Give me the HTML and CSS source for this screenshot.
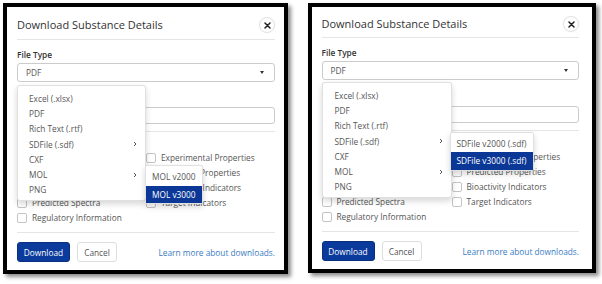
FILE: index.html
```html
<!DOCTYPE html>
<html lang="en">
<head>
<meta charset="utf-8">
<title>Download Substance Details</title>
<link rel="stylesheet" href="styles.css">
</head>
<body>
<div class="page">
  <div class="frame frame-a">
    <div class="modal">
      <div class="modal-header">
        <h2 class="modal-title">Download Substance Details</h2>
        <span class="close"><svg width="7" height="7" viewBox="0 0 7 7"><path d="M1 1L6 6M6 1L1 6" stroke="#222" stroke-width="1.5" stroke-linecap="round"/></svg></span>
      </div>
      <div class="modal-body">
        <div class="field-label">File Type</div>
        <div class="select-wrap">
          <div class="select"><span>PDF</span><span class="caret"></span></div>
          <ul class="menu">
            <li>Excel (.xlsx)</li>
            <li>PDF</li>
            <li>Rich Text (.rtf)</li>
            <li class="has-sub">SDFile (.sdf)<svg class="chev" width="4" height="6" viewBox="0 0 4 6"><path d="M1 1L3 3L1 5" fill="none" stroke="#555" stroke-width="1"/></svg></li>
            <li>CXF</li>
            <li class="has-sub">MOL<svg class="chev" width="4" height="6" viewBox="0 0 4 6"><path d="M1 1L3 3L1 5" fill="none" stroke="#555" stroke-width="1"/></svg>
              <ul class="submenu">
                <li>MOL v2000</li>
                <li class="active">MOL v3000</li>
              </ul>
            </li>
            <li>PNG</li>
          </ul>
        </div>
        <div class="field-label second"></div>
        <div class="input"></div>
        <div class="divider"></div>
        <div class="checks">
          <div class="check"></div>
          <div class="check"><span class="box"></span>Experimental Properties</div>
          <div class="check"></div>
          <div class="check"><span class="box"></span>Predicted Properties</div>
          <div class="check"></div>
          <div class="check"><span class="box"></span>Bioactivity Indicators</div>
          <div class="check"><span class="box"></span>Predicted Spectra</div>
          <div class="check"><span class="box"></span>Target Indicators</div>
          <div class="check"><span class="box"></span>Regulatory Information</div>
        </div>
        <div class="divider bottom"></div>
      </div>
      <div class="modal-footer">
        <span class="btn btn-primary">Download</span>
        <span class="btn btn-default">Cancel</span>
        <a class="learn" href="#">Learn more about downloads.</a>
      </div>
    </div>
  </div>

  <div class="frame frame-b">
    <div class="modal">
      <div class="modal-header">
        <h2 class="modal-title">Download Substance Details</h2>
        <span class="close"><svg width="7" height="7" viewBox="0 0 7 7"><path d="M1 1L6 6M6 1L1 6" stroke="#222" stroke-width="1.5" stroke-linecap="round"/></svg></span>
      </div>
      <div class="modal-body">
        <div class="field-label">File Type</div>
        <div class="select-wrap">
          <div class="select"><span>PDF</span><span class="caret"></span></div>
          <ul class="menu">
            <li>Excel (.xlsx)</li>
            <li>PDF</li>
            <li>Rich Text (.rtf)</li>
            <li class="has-sub">SDFile (.sdf)<svg class="chev" width="4" height="6" viewBox="0 0 4 6"><path d="M1 1L3 3L1 5" fill="none" stroke="#555" stroke-width="1"/></svg>
              <ul class="submenu">
                <li>SDFile v2000 (.sdf)</li>
                <li class="active">SDFile v3000 (.sdf)</li>
              </ul>
            </li>
            <li>CXF</li>
            <li class="has-sub">MOL<svg class="chev" width="4" height="6" viewBox="0 0 4 6"><path d="M1 1L3 3L1 5" fill="none" stroke="#555" stroke-width="1"/></svg></li>
            <li>PNG</li>
          </ul>
        </div>
        <div class="field-label second"></div>
        <div class="input"></div>
        <div class="divider"></div>
        <div class="checks">
          <div class="check"></div>
          <div class="check"><span class="box"></span>Experimental Properties</div>
          <div class="check"></div>
          <div class="check"><span class="box"></span>Predicted Properties</div>
          <div class="check"></div>
          <div class="check"><span class="box"></span>Bioactivity Indicators</div>
          <div class="check"><span class="box"></span>Predicted Spectra</div>
          <div class="check"><span class="box"></span>Target Indicators</div>
          <div class="check"><span class="box"></span>Regulatory Information</div>
        </div>
        <div class="divider bottom"></div>
      </div>
      <div class="modal-footer">
        <span class="btn btn-primary">Download</span>
        <span class="btn btn-default">Cancel</span>
        <a class="learn" href="#">Learn more about downloads.</a>
      </div>
    </div>
  </div>
</div>
</body>
</html>
```

FILE: styles.css
```css
* { box-sizing: border-box; }
html, body { margin: 0; padding: 0; background: #fff; }
body {
  width: 602px;
  height: 284px;
  overflow: hidden;
  font-family: "Open Sans", "DejaVu Sans", sans-serif;
  font-size: 8.3px;
  color: #333;
}
.page {
  display: flex;
  align-items: flex-start;
  gap: 20px;
  padding: 3px 0 0 3px;
}
.frame {
  border: 4px solid #000;
  background: #fff;
  box-shadow: 3px 3px 4px rgba(0, 0, 0, 0.45);
}
.frame-a { width: 285px; }
.frame-b { width: 288px; }

.modal { padding: 0 9px 8px 10px; }
.frame-b .modal { padding: 0 13px 8px 9.5px; }

.modal-header {
  display: flex;
  align-items: center;
  justify-content: space-between;
  padding: 10px 0 6px;
  border-bottom: 1px solid #e5e5e5;
}
.frame-b .modal-header { padding: 9px 0 5px; }
.modal-title {
  margin: 0;
  font-size: 11px;
  font-weight: 400;
  line-height: 16px;
  color: #333;
}
.close {
  width: 16px;
  height: 16px;
  border: 1px solid #e2e2e2;
  border-radius: 50%;
  display: flex;
  align-items: center;
  justify-content: center;
  box-shadow: 0 0 1px rgba(0,0,0,0.1);
}

.field-label {
  font-weight: 600;
  line-height: 12px;
  margin-top: 9px;
  margin-bottom: 2px;
  color: #333;
}
.field-label.second { height: 12px; margin-top: 8px; margin-bottom: 5px; }
.frame-b .field-label.second { margin-top: 9px; }

.select-wrap { position: relative; }
.select {
  height: 19px;
  border: 1px solid #ccc;
  border-radius: 3px;
  display: flex;
  align-items: center;
  justify-content: space-between;
  padding: 0 10px 0 8px;
  color: #555;
}
.caret {
  width: 0;
  height: 0;
  border-left: 2.5px solid transparent;
  border-right: 2.5px solid transparent;
  border-top: 3px solid #333;
}
.input {
  height: 17px;
  border: 1px solid #ccc;
  border-radius: 3px;
}
.divider {
  margin-top: 7px;
  border-top: 1px solid #e5e5e5;
}
.divider.bottom { margin-top: 7px; }

.menu {
  position: absolute;
  top: 22px;
  left: 0;
  width: 129px;
  margin: 0;
  padding: 5px 0 3px;
  list-style: none;
  background: #fff;
  border: 1px solid rgba(0,0,0,0.12);
  border-radius: 3px;
  box-shadow: 0 3px 6px rgba(0,0,0,0.16);
  z-index: 5;
}
.frame-b .menu { top: 21px; width: 130px; }
.menu > li {
  position: relative;
  line-height: 15.2px;
  padding: 0 8px 0 11px;
  color: #555;
  display: flex;
  align-items: center;
  justify-content: space-between;
}
.frame-b .menu > li { padding-left: 12px; }
.chev { display: block; }
.submenu {
  position: absolute;
  top: -2px;
  left: 100%;
  margin: 0;
  padding: 2px 0 0;
  list-style: none;
  background: #fff;
  border: 1px solid rgba(0,0,0,0.12);
  border-radius: 2px;
  box-shadow: 0 3px 6px rgba(0,0,0,0.16);
  white-space: nowrap;
}
.frame-b .submenu { margin-left: -1px; }
.submenu li {
  line-height: 17.5px;
  padding: 0 6px;
  color: #555;
}
.submenu li.active {
  background: #0b3896;
  color: #fff;
}

.checks {
  display: grid;
  grid-template-columns: 129px 1fr;
  grid-auto-rows: 15px;
  padding-top: 18px;
}
.frame-b .checks { grid-template-columns: 130px 1fr; }
.check {
  display: flex;
  align-items: center;
  line-height: 15px;
  color: #555;
  white-space: nowrap;
}
.box {
  width: 10px;
  height: 10px;
  border: 1px solid #c4c4c4;
  border-radius: 2px;
  margin-right: 5px;
  flex: none;
}

.modal-footer {
  display: flex;
  align-items: center;
  padding-top: 9px;
}
.btn {
  height: 20px;
  display: inline-flex;
  align-items: center;
  justify-content: center;
  border-radius: 3px;
  font-size: 8.3px;
}
.btn-primary {
  width: 53px;
  background: #0a3a9c;
  color: #fff;
  border: 1px solid #08307f;
}
.btn-default {
  width: 40px;
  margin-left: 7px;
  background: #fff;
  color: #555;
  border: 1px solid #ddd;
}
.learn {
  margin-left: auto;
  color: #3a7cc2;
  text-decoration: none;
}
```
